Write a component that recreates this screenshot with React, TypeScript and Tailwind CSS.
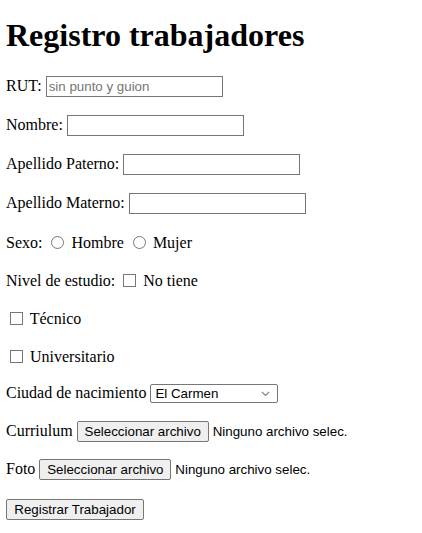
import React from "react";

const serif = "font-['Liberation_Serif','Times_New_Roman',serif]";
const sans = "font-['Liberation_Sans',Arial,sans-serif]";

function TextInput({ placeholder }: { placeholder?: string }) {
  return (
    <input
      type="text"
      placeholder={placeholder}
      className={`${sans} inline-block h-[21px] w-[177px] border border-[#767676] bg-white px-[2px] py-px align-baseline text-[13.33px] text-black placeholder:text-[#757575]`}
    />
  );
}

function Row({ h, children }: { h: string; children: React.ReactNode }) {
  return (
    <div className={`flex items-center ${h}`}>
      <span>{children}</span>
    </div>
  );
}

function Check() {
  return (
    <input
      type="checkbox"
      className="mt-[3px] mr-[3px] ml-[4px] inline-block h-[13px] w-[13px] appearance-none border border-[#767676] bg-white align-[-1px] checked:bg-[#0075ff]"
    />
  );
}

function Radio() {
  return (
    <input
      type="radio"
      name="sexo"
      className="mt-[3px] mr-[3px] ml-[5px] inline-block h-[13px] w-[13px] appearance-none rounded-full border border-[#767676] bg-white align-[-1px] checked:border-[4px] checked:border-[#0075ff]"
    />
  );
}

function FileInput({ label, h }: { label: string; h: string }) {
  return (
    <Row h={h}>
      {label}{" "}
      <span className={`${sans} inline-flex items-center align-baseline text-[13.33px]`}>
        <button
          type="button"
          className="mr-1 h-[21px] w-[132px] rounded-[2px] border border-[#767676] bg-[#efefef] px-[6px] text-black"
        >
          Seleccionar archivo
        </button>
        Ninguno archivo selec.
      </span>
    </Row>
  );
}

export default function App() {
  return (
    <div className={`${serif} min-h-[533px] bg-white px-[6px] text-[16px] leading-[normal] text-black`}>
      <div className="flex h-[67px] items-start pt-[17px]">
        <h1 className="text-[32px] font-bold leading-[normal]">Registro trabajadores</h1>
      </div>

      <form onSubmit={(e) => e.preventDefault()} className="flex flex-col">
        <Row h="h-[39px]">
          RUT: <TextInput placeholder="sin punto y guion" />
        </Row>
        <Row h="h-[39px]">
          Nombre: <TextInput />
        </Row>
        <Row h="h-[39px]">
          Apellido Paterno: <TextInput />
        </Row>
        <Row h="h-[39px]">
          Apellido Materno: <TextInput />
        </Row>
        <Row h="h-[38px]">
          Sexo: <Radio /> Hombre <Radio /> Mujer
        </Row>
        <Row h="h-[38px]">
          Nivel de estudio: <Check /> No tiene
        </Row>
        <Row h="h-[38px]">
          <Check /> Técnico
        </Row>
        <Row h="h-[38px]">
          <Check /> Universitario
        </Row>
        <Row h="h-[37px]">
          Ciudad de nacimiento{" "}
          <span className="relative inline-block align-baseline">
            <select
              defaultValue="El Carmen"
              className={`${sans} h-[19px] w-[128px] appearance-none rounded-[2px] border border-[#767676] bg-white pl-[4px] text-[13.33px] text-black`}
            >
              <option>El Carmen</option>
              <option>Santiago</option>
            </select>
            <svg
              className="pointer-events-none absolute top-[7px] right-[8px]"
              width="9"
              height="6"
              viewBox="0 0 9 6"
              fill="none"
            >
              <path d="M1 1l3.5 3.5L8 1" stroke="#8a8a8a" strokeWidth="1.2" />
            </svg>
          </span>
        </Row>
        <FileInput label="Curriulum" h="h-[38px]" />
        <FileInput label="Foto" h="h-[39px]" />
        <Row h="h-[40px]">
          <button
            type="submit"
            className={`${sans} h-[21px] w-[138px] rounded-[2px] border border-[#767676] bg-[#efefef] px-[6px] text-[13.33px] text-black`}
          >
            Registrar Trabajador
          </button>
        </Row>
      </form>
    </div>
  );
}
